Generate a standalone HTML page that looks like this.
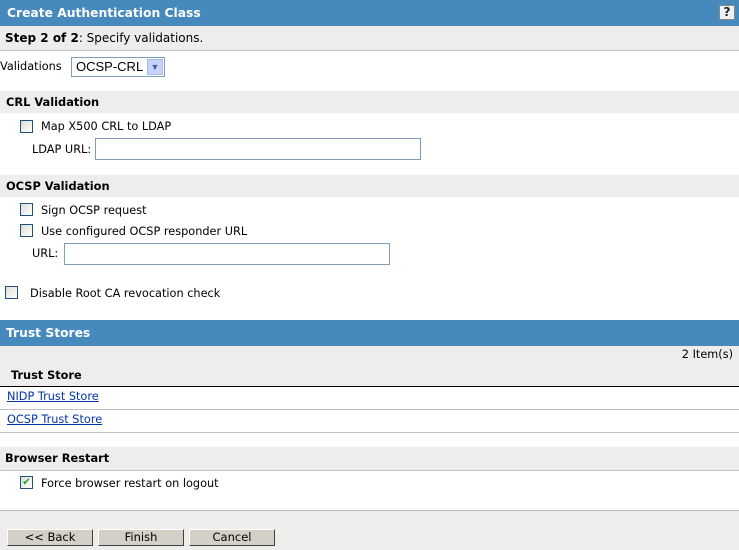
<!DOCTYPE html>
<html><head><style>
*{margin:0;padding:0;box-sizing:border-box}
body{width:739px;height:550px;background:#fff;font-family:"DejaVu Sans",Verdana,sans-serif;font-size:11.3px;color:#000;position:relative;overflow:hidden}
.a{position:absolute;white-space:nowrap}
.blue{background:#4689bc;color:#fff;font-weight:bold;font-size:12.3px;left:0;width:739px}
.gray{background:#eeedeb;left:0;width:739px}
.sh{font-size:11.4px;font-weight:bold}
.cb{position:absolute;width:13px;height:13px;border:1px solid #1c5180;background:linear-gradient(135deg,#dcdcd7,#fff)}
.inp{position:absolute;border:1px solid #7f9db9;background:#fff}
.btn{position:absolute;top:529px;height:17px;background:#d4d0c8;border:1px solid;border-color:#fff #404040 #404040 #fff;text-align:center;font-size:11.5px;line-height:15px}
a{color:#0033aa;text-decoration:underline}
</style></head><body>
<div class="a blue" style="top:0;height:26px;line-height:26px;padding-left:7px">Create Authentication Class</div>
<div class="a" style="left:719px;top:5px;width:16px;height:15px;background:#f0f0f0;border:1px solid #888;color:#222;font-weight:bold;font-size:12px;text-align:center;line-height:13px">?</div>
<div class="a gray" style="top:26px;height:25px;line-height:25px;padding-left:5px;font-size:12px;border-bottom:1px solid #c0c0c0"><b>Step 2 of 2</b>: Specify validations.</div>
<div class="a" style="left:0;top:60px">Validations</div>
<div class="inp" style="left:71px;top:57px;width:94px;height:20px;font-family:'Liberation Sans',sans-serif;font-size:13px;line-height:18px;padding-left:4px">OCSP-CRL
<div style="position:absolute;right:1px;top:1px;width:16px;height:16px;background:#c3d3fd;border:1px solid #aabbe0;color:#4d6185;font-size:9px;text-align:center;line-height:14px">▼</div></div>
<div class="a gray sh" style="top:91px;height:22px;line-height:22px;padding-left:6px">CRL Validation</div>
<div class="cb" style="left:20px;top:120px"></div>
<div class="a" style="left:41px;top:120px">Map X500 CRL to LDAP</div>
<div class="a" style="left:32px;top:143px">LDAP URL:</div>
<div class="inp" style="left:95px;top:138px;width:326px;height:22px"></div>
<div class="a gray sh" style="top:175px;height:22px;line-height:22px;padding-left:6px">OCSP Validation</div>
<div class="cb" style="left:20px;top:203px"></div>
<div class="a" style="left:41px;top:204px">Sign OCSP request</div>
<div class="cb" style="left:20px;top:224px"></div>
<div class="a" style="left:41px;top:225px">Use configured OCSP responder URL</div>
<div class="a" style="left:32px;top:247px">URL:</div>
<div class="inp" style="left:64px;top:243px;width:326px;height:22px"></div>
<div class="cb" style="left:5px;top:286px"></div>
<div class="a" style="left:30px;top:287px">Disable Root CA revocation check</div>
<div class="a blue" style="top:320px;height:26px;line-height:26px;padding-left:6px">Trust Stores</div>
<div class="a gray" style="top:346px;height:41px;border-bottom:1px solid #000"></div>
<div class="a" style="right:6px;top:348px">2 Item(s)</div>
<div class="a" style="left:11px;top:369px;font-weight:bold">Trust Store</div>
<div class="a" style="left:0;top:387px;width:739px;height:23px;border-bottom:1px solid #c0c0c0;padding:3px 0 0 7px"><a>NIDP Trust Store</a></div>
<div class="a" style="left:0;top:410px;width:739px;height:23px;border-bottom:1px solid #c0c0c0;padding:3px 0 0 7px"><a>OCSP Trust Store</a></div>
<div class="a gray sh" style="top:447px;height:24px;line-height:23px;padding-left:5px;border-bottom:1px solid #c0c0c0">Browser Restart</div>
<div class="cb" style="left:20px;top:476px;color:#21a121;font-size:10px;line-height:11px;text-align:center;font-weight:bold">✔</div>
<div class="a" style="left:41px;top:477px">Force browser restart on logout</div>
<div class="a gray" style="top:510px;height:40px;border-top:1px solid #c0c0c0"></div>
<div class="btn" style="left:7px;width:86px">&lt;&lt; Back</div>
<div class="btn" style="left:98px;width:86px">Finish</div>
<div class="btn" style="left:189px;width:86px">Cancel</div>
</body></html>
